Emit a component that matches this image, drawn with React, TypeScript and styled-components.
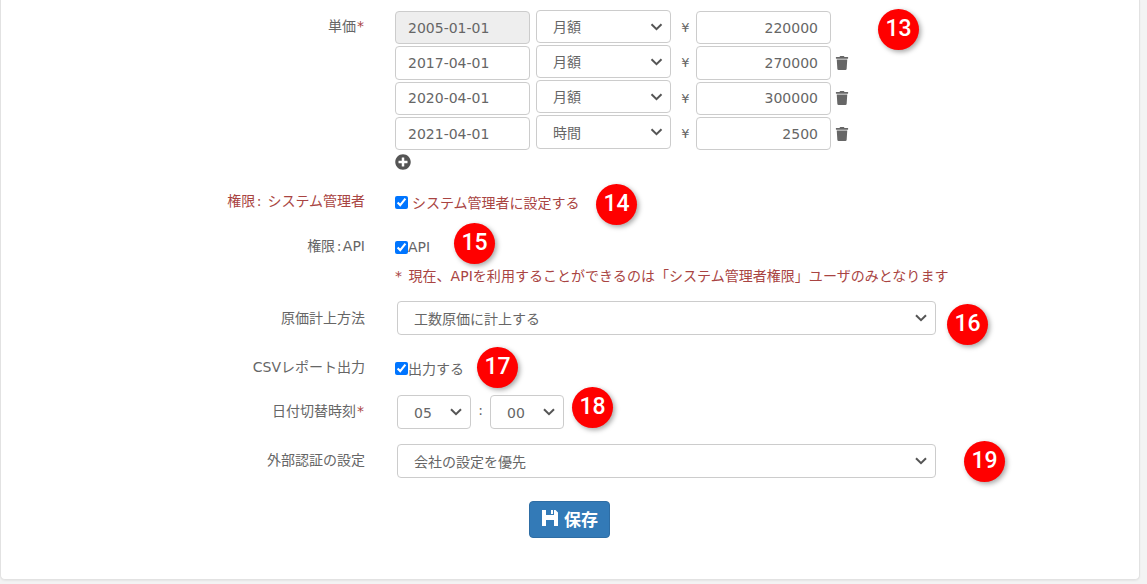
import { createGlobalStyle, styled } from 'styled-components';
import { FaPlusCircle, FaTrash } from 'react-icons/fa';

const GlobalStyle = createGlobalStyle`
	html,
	body {
		margin: 0;
		height: 584px;
		overflow: hidden;
		background: #f3f3f3;
	}
`;

const FONT = `'DejaVu Sans', 'Noto Sans CJK JP', sans-serif`;

const Page = styled.div`
	position: relative;
	width: 1140px;
	height: 580px;
	box-sizing: border-box;
	background: #fff;
	border: 1px solid #e2e2e2;
	border-top: none;
	border-radius: 0 0 5px 5px;
	box-shadow: 0 1px 2px rgba(0, 0, 0, 0.06);
	font-family: ${FONT};
	font-size: 14px;
	color: #666;
`;

const Form = styled.form`
	display: flex;
	flex-direction: column;
	padding-top: 11px;
`;

const Row = styled.div<{ $top: number }>`
	display: grid;
	grid-template-columns: 364px 1fr;
	column-gap: 30px;
	margin-top: ${(p) => p.$top}px;
`;

const Label = styled.label<{ $danger?: boolean; $shift?: number }>`
	text-align: right;
	line-height: 20px;
	padding-top: ${(p) => p.$shift ?? 0}px;
	white-space: nowrap;
	color: ${(p) => (p.$danger ? '#a94442' : '#666')};
`;

const Required = styled.span`
	margin: 0 1px;
	color: #a94442;
`;

const LabelSep = styled.span`
	margin: 0 1.5px;
`;

const PriceList = styled.div`
	display: flex;
	flex-direction: column;
	gap: 2px;
`;

const PriceLine = styled.div`
	display: flex;
	align-items: flex-start;
	height: 33.33px;
`;

const TextBox = styled.input<{ $right?: boolean }>`
	box-sizing: border-box;
	width: 135px;
	height: 33.33px;
	padding: 0 12px;
	border: 1px solid #ccc;
	border-radius: 4px;
	outline: none;
	background: #fff;
	color: #666;
	font-family: ${FONT};
	font-size: 14px;
	text-align: ${(p) => (p.$right ? 'right' : 'left')};

	&:disabled {
		background: #eee;
	}
`;

const SelectWrap = styled.div<{ $width: number }>`
	position: relative;
	width: ${(p) => p.$width}px;
	height: 34px;

	svg {
		position: absolute;
		right: 9px;
		top: 13px;
		pointer-events: none;
	}
`;

const SelectBox = styled.select`
	appearance: none;
	box-sizing: border-box;
	width: 100%;
	height: 100%;
	padding: 1px 16px 0;
	border: 1px solid #ccc;
	border-radius: 4px;
	outline: none;
	background: #fff;
	color: #666;
	font-family: ${FONT};
	font-size: 14px;
`;

const PriceSelect = styled(SelectWrap)`
	height: 33.33px;
	margin: -1.5px 0 0 6px;

	svg {
		right: 8px;
		width: 13px;
	}
`;

const Yen = styled.span`
	box-sizing: border-box;
	width: 25px;
	padding-left: 4px;
	line-height: 34px;
	text-align: center;
	font-size: 13px;
`;

const TrashButton = styled.span`
	display: flex;
	align-items: center;
	height: 33.33px;
	margin-left: 4px;
	color: #666;
	font-size: 14px;
`;

const AddButton = styled.span`
	display: flex;
	margin-top: 2px;
	color: #555;
	font-size: 16px;
`;

const CheckLine = styled.div<{ $danger?: boolean }>`
	display: flex;
	align-items: center;
	height: 20px;
	margin-top: 1px;
	color: ${(p) => (p.$danger ? '#a94442' : '#666')};
`;

const Check = styled.input.attrs({ type: 'checkbox' })<{ $spaced?: boolean }>`
	width: 13px;
	height: 13px;
	margin: 0 ${(p) => (p.$spaced ? '4px' : '0')} 0 0;
`;

const Note = styled.p`
	margin: 9px 0 0;
	line-height: 20px;
	color: #a94442;
	font-size: 14px;
	word-spacing: 2px;
	letter-spacing: 0.03px;
	white-space: nowrap;
`;

const TimeLine = styled.div`
	display: flex;
	align-items: flex-start;
`;

const Colon = styled.span`
	width: 19px;
	line-height: 30px;
	text-align: center;
`;

const Indented = styled.div`
	padding-left: 2px;
`;

const ButtonRow = styled.div`
	display: flex;
	justify-content: center;
	margin-top: 23px;
	padding-right: 2px;
`;

const SaveButton = styled.button`
	display: flex;
	align-items: center;
	justify-content: center;
	gap: 6px;
	box-sizing: border-box;
	width: 81px;
	height: 37px;
	padding: 0 0 3px 2px;
	border: 1px solid #2e6da4;
	border-radius: 4px;
	background: #337ab7;
	color: #fff;
	font-family: ${FONT};
	font-size: 17px;
	font-weight: bold;
`;

const Badge = styled.div<{ $x: number; $y: number }>`
	position: absolute;
	left: ${(p) => p.$x - 1}px;
	top: ${(p) => p.$y}px;
	width: 41px;
	height: 41px;
	border-radius: 50%;
	background: #ff0000;
	box-shadow: 2px 2px 5px rgba(0, 0, 0, 0.35);
	color: #fff;
	font-family: Roboto, sans-serif;
	font-size: 23px;
	font-weight: 500;
	line-height: 39px;
	text-align: center;
`;

const Chevron = () => (
	<svg width="12" height="8" viewBox="0 0 12 8" fill="none">
		<path d="M1 1.2 6 6.2l5-5" stroke="#555" strokeWidth="2" />
	</svg>
);

const SaveIcon = () => (
	<svg width="16" height="16" viewBox="0 0 16 16" fill="#fff">
		<path
			fillRule="evenodd"
			d="M0 0h4v5h8V0h1.5L16 2.5V16H0zM4 10v6h8v-6zM9 .5h2v3.5H9z"
		/>
		<path d="M9 0h2v4H9z" />
	</svg>
);

const prices = [
	{ date: '2005-01-01', unit: '月額', amount: '220000', locked: true },
	{ date: '2017-04-01', unit: '月額', amount: '270000' },
	{ date: '2020-04-01', unit: '月額', amount: '300000' },
	{ date: '2021-04-01', unit: '時間', amount: '2500' }
];

// left/top of each numbered marker on the screenshot
const badges = [
	{ n: 13, x: 878, y: 9 },
	{ n: 14, x: 596, y: 184 },
	{ n: 15, x: 454, y: 223 },
	{ n: 16, x: 947, y: 304 },
	{ n: 17, x: 477, y: 347 },
	{ n: 18, x: 572, y: 387 },
	{ n: 19, x: 964, y: 441 }
];

function App() {
	return (
		<Page>
			<GlobalStyle />
			<Form>
				<Row $top={0}>
					<Label $shift={5}>
						単価<Required>*</Required>
					</Label>
					<PriceList>
						{prices.map((p) => (
							<PriceLine key={p.date}>
								<TextBox defaultValue={p.date} disabled={p.locked} />
								<PriceSelect $width={135}>
									<SelectBox defaultValue={p.unit}>
										<option>月額</option>
										<option>時間</option>
									</SelectBox>
									<Chevron />
								</PriceSelect>
								<Yen>¥</Yen>
								<TextBox defaultValue={p.amount} $right />
								{!p.locked && (
									<TrashButton>
										<FaTrash />
									</TrashButton>
								)}
							</PriceLine>
						))}
						<AddButton>
							<FaPlusCircle />
						</AddButton>
					</PriceList>
				</Row>
				<Row $top={21}>
					<Label $danger>
						権限<LabelSep>:</LabelSep> システム管理者
					</Label>
					<CheckLine $danger>
						<Check defaultChecked $spaced />
						システム管理者に設定する
					</CheckLine>
				</Row>
				<Row $top={24}>
					<Label>
						権限<LabelSep>:</LabelSep>API
					</Label>
					<div>
						<CheckLine>
							<Check defaultChecked />
							API
						</CheckLine>
						<Note>* 現在、APIを利用することができるのは「システム管理者権限」ユーザのみとなります</Note>
					</div>
				</Row>
				<Row $top={15}>
					<Label $shift={7}>原価計上方法</Label>
					<Indented>
						<SelectWrap $width={539}>
							<SelectBox defaultValue="工数原価に計上する">
								<option>工数原価に計上する</option>
							</SelectBox>
							<Chevron />
						</SelectWrap>
					</Indented>
				</Row>
				<Row $top={22}>
					<Label>CSVレポート出力</Label>
					<CheckLine>
						<Check defaultChecked />
						出力する
					</CheckLine>
				</Row>
				<Row $top={17}>
					<Label $shift={6}>
						日付切替時刻<Required>*</Required>
					</Label>
					<Indented>
						<TimeLine>
							<SelectWrap $width={74}>
								<SelectBox defaultValue="05">
									<option>05</option>
								</SelectBox>
								<Chevron />
							</SelectWrap>
							<Colon>:</Colon>
							<SelectWrap $width={74}>
								<SelectBox defaultValue="00">
									<option>00</option>
								</SelectBox>
								<Chevron />
							</SelectWrap>
						</TimeLine>
					</Indented>
				</Row>
				<Row $top={15}>
					<Label $shift={6}>外部認証の設定</Label>
					<Indented>
						<SelectWrap $width={539}>
							<SelectBox defaultValue="会社の設定を優先">
								<option>会社の設定を優先</option>
							</SelectBox>
							<Chevron />
						</SelectWrap>
					</Indented>
				</Row>
				<ButtonRow>
					<SaveButton type="button">
						<SaveIcon />
						保存
					</SaveButton>
				</ButtonRow>
			</Form>
			{badges.map((b) => (
				<Badge key={b.n} $x={b.x} $y={b.y}>
					{b.n}
				</Badge>
			))}
		</Page>
	);
}

export default App;
